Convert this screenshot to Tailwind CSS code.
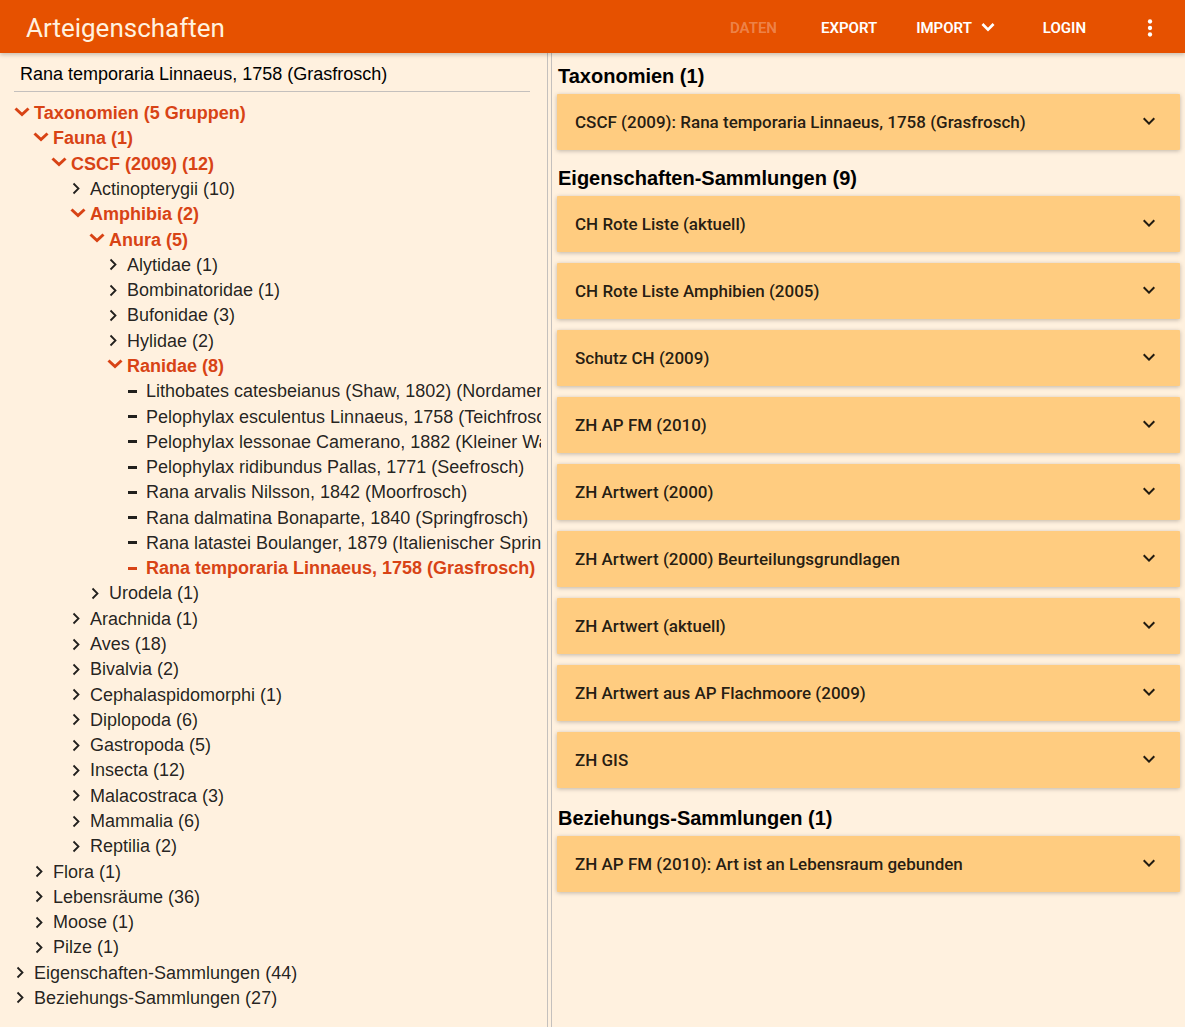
<!DOCTYPE html>
<html lang="de">
<head>
<meta charset="utf-8">
<meta name="viewport" content="width=device-width, initial-scale=1">
<title>Arteigenschaften</title>
<script src="https://cdn.jsdelivr.net/npm/@tailwindcss/browser@4"></script>
</head>
<body class="flex min-h-screen flex-col bg-[#fff1df] font-['Liberation_Sans',Arial,sans-serif] text-black">

<header class="relative z-10 flex h-[53px] shrink-0 items-center justify-between bg-[#e65100] pt-[2px] pr-[22px] pl-[26px] font-[Roboto,sans-serif] text-white shadow-[0_2px_4px_rgba(0,0,0,0.2)]">
  <h1 class="text-[26px] leading-8 text-[#fff1df]"><a href="#">Arteigenschaften</a></h1>
  <nav class="flex items-center text-[15px] leading-6 font-semibold">
    <button type="button" disabled class="mr-11 text-white/30">DATEN</button>
    <button type="button" class="mr-[39px]">EXPORT</button>
    <button type="button" class="mr-[43px] flex items-center gap-1">IMPORT
      <svg class="size-6" viewBox="0 0 24 24" fill="currentColor" aria-hidden="true"><path d="M16.59 7.09 12 11.67 7.41 7.09 5.5 9l6.5 6.5 6.500-6.5z"/></svg>
    </button>
    <button type="button" class="mr-[51px]">LOGIN</button>
    <button type="button" aria-label="Mehr">
      <svg class="size-[26px]" viewBox="0 0 24 24" fill="currentColor" aria-hidden="true"><circle cx="12" cy="6" r="2"/><circle cx="12" cy="12" r="2"/><circle cx="12" cy="18" r="2"/></svg>
    </button>
  </nav>
</header>

<main class="grid flex-1 grid-cols-[547fr_5px_633fr]">
  <section class="flex min-w-0 flex-col pr-[6px] pb-4 pl-3" aria-label="Navigation">
    <input type="text" aria-label="Suchen" value="Rana temporaria Linnaeus, 1758 (Grasfrosch)" class="mr-[11px] mb-[9px] ml-[2px] h-[39px] border-b border-[#c4c0bd] bg-transparent px-[6px] pt-1 text-[18px] leading-6 outline-none">
    <ul id="tree" role="tree" class="flex flex-1 flex-col overflow-hidden text-[18px] leading-[25px]"></ul>
  </section>

  <div role="separator" aria-orientation="vertical" class="cursor-col-resize border-x border-[#c4c0bd]"></div>

  <section class="min-w-0 px-[5px]" aria-label="Details">
    <h2 class="mt-[11px] mb-[5px] px-px text-[20px] leading-[25px] font-bold">Taxonomien (1)</h2>
    <div id="taxonomies" class="flex flex-col gap-[11px]"></div>
    <h2 class="mt-4 mb-[5px] px-px text-[20px] leading-[25px] font-bold">Eigenschaften-Sammlungen (9)</h2>
    <div id="properties" class="flex flex-col gap-[11px]"></div>
    <h2 class="mt-[18px] mb-[5px] px-px text-[20px] leading-[25px] font-bold">Beziehungs-Sammlungen (1)</h2>
    <div id="relations" class="flex flex-col gap-[11px]"></div>
  </section>
</main>

<script>
  // One entry per tree row: [level, kind, label]; kinds are open, closed, leaf and active
  const rows = [
    [0, "open", "Taxonomien (5 Gruppen)"],
    [1, "open", "Fauna (1)"],
    [2, "open", "CSCF (2009) (12)"],
    [3, "closed", "Actinopterygii (10)"],
    [3, "open", "Amphibia (2)"],
    [4, "open", "Anura (5)"],
    [5, "closed", "Alytidae (1)"],
    [5, "closed", "Bombinatoridae (1)"],
    [5, "closed", "Bufonidae (3)"],
    [5, "closed", "Hylidae (2)"],
    [5, "open", "Ranidae (8)"],
    [6, "leaf", "Lithobates catesbeianus (Shaw, 1802) (Nordamerikanischer Ochsenfrosch)"],
    [6, "leaf", "Pelophylax esculentus Linnaeus, 1758 (Teichfrosch)"],
    [6, "leaf", "Pelophylax lessonae Camerano, 1882 (Kleiner Wasserfrosch)"],
    [6, "leaf", "Pelophylax ridibundus Pallas, 1771 (Seefrosch)"],
    [6, "leaf", "Rana arvalis Nilsson, 1842 (Moorfrosch)"],
    [6, "leaf", "Rana dalmatina Bonaparte, 1840 (Springfrosch)"],
    [6, "leaf", "Rana latastei Boulanger, 1879 (Italienischer Springfrosch)"],
    [6, "active", "Rana temporaria Linnaeus, 1758 (Grasfrosch)"],
    [4, "closed", "Urodela (1)"],
    [3, "closed", "Arachnida (1)"],
    [3, "closed", "Aves (18)"],
    [3, "closed", "Bivalvia (2)"],
    [3, "closed", "Cephalaspidomorphi (1)"],
    [3, "closed", "Diplopoda (6)"],
    [3, "closed", "Gastropoda (5)"],
    [3, "closed", "Insecta (12)"],
    [3, "closed", "Malacostraca (3)"],
    [3, "closed", "Mammalia (6)"],
    [3, "closed", "Reptilia (2)"],
    [1, "closed", "Flora (1)"],
    [1, "closed", "Lebensräume (36)"],
    [1, "closed", "Moose (1)"],
    [1, "closed", "Pilze (1)"],
    [0, "closed", "Eigenschaften-Sammlungen (44)"],
    [0, "closed", "Beziehungs-Sammlungen (27)"]
  ];
  const indent = ["pl-0", "pl-[19px]", "pl-[37px]", "pl-[56px]", "pl-[75px]", "pl-[93px]", "pl-[112px]"];
  const dash = '<path d="M4 9.500h9" stroke-width="3"/>';
  const glyph = {
    open: '<path d="m3.500 4.500 6.500 6 6.500-6" stroke-width="3"/>',
    closed: '<path d="m5.500 4.500 5 5-5 5" stroke-width="1.8"/>',
    leaf: dash,
    active: dash
  };
  document.getElementById("tree").innerHTML = rows.map(([level, kind, label]) => {
    const tone = kind === "open" || kind === "active" ? "font-bold text-[#d84315]" : "text-black/87";
    const expanded = kind === "open" ? 'aria-expanded="true"' : kind === "closed" ? 'aria-expanded="false"' : "";
    return `<li role="treeitem" aria-level="${level + 1}" ${expanded} class="flex flex-1 cursor-pointer items-center gap-[2px] ${indent[level]} ${tone}">
      <svg class="size-5 shrink-0" viewBox="0 0 20 20" fill="none" stroke="currentColor" aria-hidden="true">${glyph[kind]}</svg>
      <span class="whitespace-nowrap">${label}</span></li>`;
  }).join("");

  const cards = {
    taxonomies: ["CSCF (2009): Rana temporaria Linnaeus, 1758 (Grasfrosch)"],
    properties: ["CH Rote Liste (aktuell)", "CH Rote Liste Amphibien (2005)", "Schutz CH (2009)", "ZH AP FM (2010)", "ZH Artwert (2000)", "ZH Artwert (2000) Beurteilungsgrundlagen", "ZH Artwert (aktuell)", "ZH Artwert aus AP Flachmoore (2009)", "ZH GIS"],
    relations: ["ZH AP FM (2010): Art ist an Lebensraum gebunden"]
  };
  for (const [id, titles] of Object.entries(cards)) {
    document.getElementById(id).innerHTML = titles.map(title => `
      <button type="button" aria-expanded="false" class="flex h-14 w-full items-center justify-between rounded-[1px] bg-[#ffcc80] pr-[19px] pl-[18px] text-left font-[Roboto,sans-serif] text-[17px] leading-6 font-medium text-black/87 shadow-[0_1px_4px_rgba(0,0,0,0.25)]">
        <span>${title}</span>
        <svg class="size-6 shrink-0" viewBox="0 0 24 24" fill="currentColor" aria-hidden="true"><path d="M16.59 7.59 12 12.17 7.410 7.590 6 9l6 6 6-6z"/></svg>
      </button>`).join("");
  }
</script>
</body>
</html>
